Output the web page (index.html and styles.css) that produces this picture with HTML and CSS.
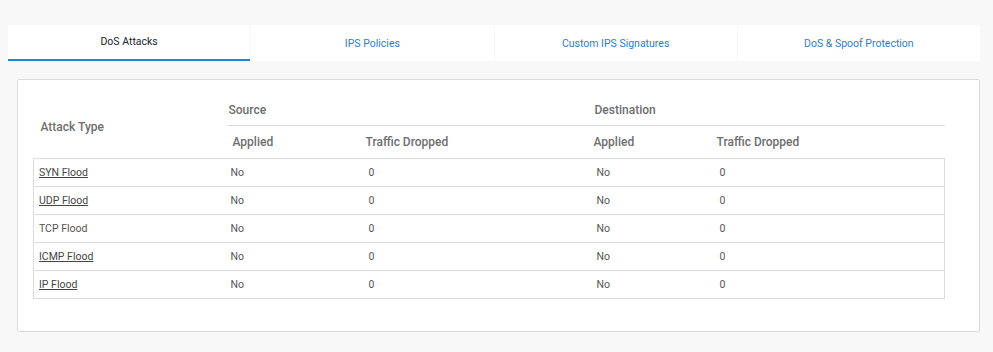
FILE: index.html
```html
<!DOCTYPE html>
<html>
<head>
<meta charset="utf-8">
<link rel="stylesheet" href="styles.css">
</head>
<body>
<div class="page">
  <div class="tabs">
    <div class="tab active">DoS Attacks</div>
    <div class="tab">IPS Policies</div>
    <div class="tab">Custom IPS Signatures</div>
    <div class="tab">DoS &amp; Spoof Protection</div>
  </div>
  <div class="panel">
    <table class="grid">
      <colgroup>
        <col class="c1"><col class="c2"><col class="c3"><col class="c4"><col class="c5">
      </colgroup>
      <thead>
        <tr class="hrow1">
          <th rowspan="2" class="h-type">Attack Type</th>
          <th colspan="2" class="h-group">Source</th>
          <th colspan="2" class="h-group">Destination</th>
        </tr>
        <tr class="hrow2">
          <th class="h-sub h-applied-src">Applied</th>
          <th class="h-sub">Traffic Dropped</th>
          <th class="h-sub">Applied</th>
          <th class="h-sub">Traffic Dropped</th>
        </tr>
      </thead>
      <tbody>
        <tr><td><a class="lnk" href="#">SYN Flood</a></td><td>No</td><td>0</td><td>No</td><td>0</td></tr>
        <tr><td><a class="lnk" href="#">UDP Flood</a></td><td>No</td><td>0</td><td>No</td><td>0</td></tr>
        <tr><td>TCP Flood</td><td>No</td><td>0</td><td>No</td><td>0</td></tr>
        <tr><td><a class="lnk" href="#">ICMP Flood</a></td><td>No</td><td>0</td><td>No</td><td>0</td></tr>
        <tr><td><a class="lnk" href="#">IP Flood</a></td><td>No</td><td>0</td><td>No</td><td>0</td></tr>
      </tbody>
    </table>
  </div>
</div>
</body>
</html>
```

FILE: styles.css
```css
html, body {
  margin: 0;
  padding: 0;
  background: #f8f8f8;
  font-family: Roboto, "Liberation Sans", sans-serif;
}
.page {
  padding: 25px 13px 0 8px;
}
.tabs {
  display: grid;
  grid-template-columns: repeat(4, 1fr);
  column-gap: 1px;
  height: 36px;
}
.tab {
  background: #fff;
  display: flex;
  align-items: center;
  justify-content: center;
  font-size: 10.5px;
  color: #2f7dcc;
  box-sizing: border-box;
}
.tab.active {
  color: #1b1b33;
  border-bottom: 2px solid #1f84d1;
  padding-bottom: 2px;
}
.panel {
  margin: 18px 0 0 9px;
  background: #fff;
  border: 1px solid #dcdcdc;
  border-radius: 2px;
  padding: 15px 35px 32px 15px;
}
.grid {
  width: 911px;
  table-layout: fixed;
  border-collapse: collapse;
}
.c1 { width: 193px; }
.c2 { width: 138px; }
.c3 { width: 228px; }
.c4 { width: 123px; }
.c5 { width: 229px; }
th {
  font-size: 12px;
  font-weight: 500;
  color: #6e6e6e;
  text-align: left;
  padding: 0 0 0 2px;
}
.hrow1 th { height: 30px; }
.hrow2 th { height: 32px; }
.h-type { padding-left: 7px; vertical-align: middle; }
.h-group { border-bottom: 1px solid #dcdcdc; }
.h-sub { padding-left: 1px; }
.h-sub.h-applied-src { padding-left: 6px; }
tbody tr {
  height: 28px;
}
tbody td {
  border-top: 1px solid #dcdcdc;
  border-bottom: 1px solid #dcdcdc;
  font-size: 10.5px;
  color: #555;
  padding: 0 0 0 4px;
  vertical-align: middle;
}
tbody td:first-child {
  border-left: 1px solid #dcdcdc;
  padding-left: 5px;
}
tbody td:last-child {
  border-right: 1px solid #dcdcdc;
}
.lnk {
  color: #444;
  text-decoration: underline;
}
```
